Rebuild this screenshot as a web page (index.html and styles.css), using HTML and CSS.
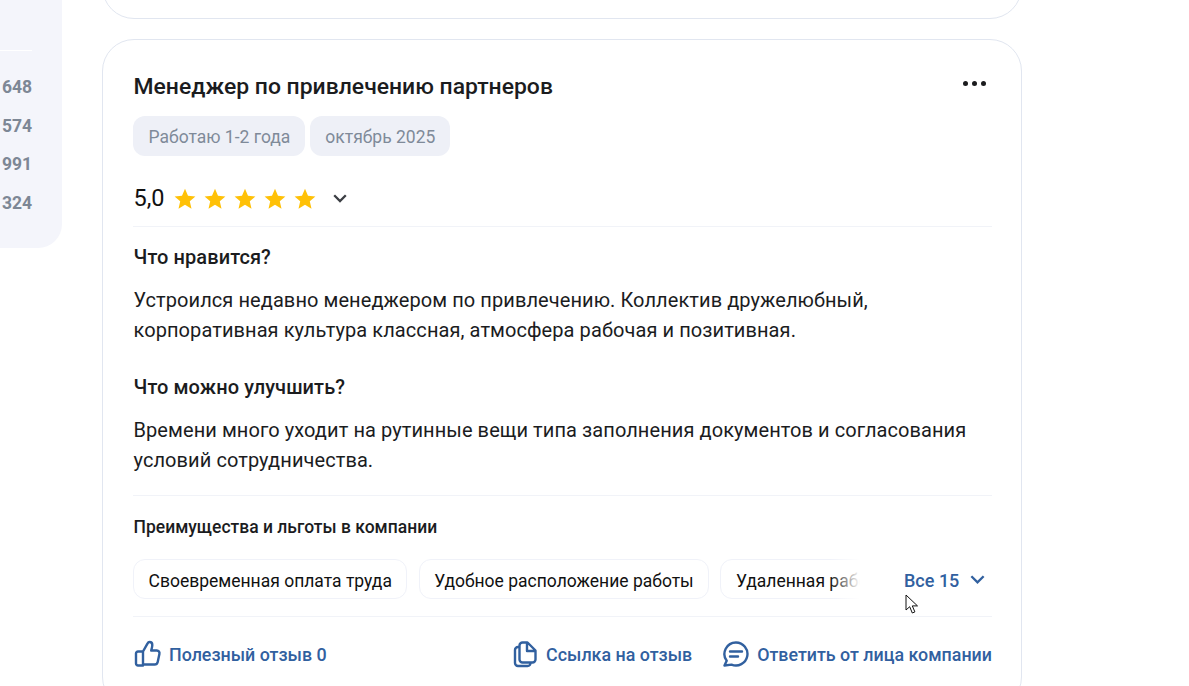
FILE: index.html
```html
<!DOCTYPE html>
<html lang="en">
<head>
    <meta charset="UTF-8">
    <meta name="viewport" content="width=device-width, initial-scale=1.0">
    <title>Отзывы</title>
    <link rel="stylesheet" href="styles.css">
</head>
<body>
<div class="page">
    <aside class="side">
        <div class="side-line"></div>
        <div class="side-num">648</div>
        <div class="side-num">574</div>
        <div class="side-num">991</div>
        <div class="side-num">324</div>
    </aside>

    <main class="feed">
        <div class="card card-prev"></div>

        <div class="card">
            <div class="card-head">
                <h2 class="card-title">Менеджер по привлечению партнеров</h2>
                <div class="more"><span></span><span></span><span></span></div>
            </div>

            <div class="tags">
                <span class="tag">Работаю 1-2 года</span>
                <span class="tag">октябрь 2025</span>
            </div>

            <div class="rating">
                <span class="rating-num">5,0</span>
                <div class="stars">
                    <svg class="star" viewBox="0 0 22 22"><path d="M11 .8l3 7 7.400.6-5.600 4.900 1.700 7.400L11 16.800l-6.500 3.900 1.700-7.400L.6 8.400 8 7.800z"/></svg>
                    <svg class="star" viewBox="0 0 22 22"><path d="M11 .8l3 7 7.400.6-5.600 4.900 1.700 7.400L11 16.800l-6.500 3.900 1.700-7.400L.6 8.400 8 7.800z"/></svg>
                    <svg class="star" viewBox="0 0 22 22"><path d="M11 .8l3 7 7.400.6-5.600 4.900 1.700 7.400L11 16.800l-6.500 3.900 1.700-7.400L.6 8.400 8 7.800z"/></svg>
                    <svg class="star" viewBox="0 0 22 22"><path d="M11 .8l3 7 7.400.6-5.600 4.900 1.700 7.400L11 16.800l-6.500 3.900 1.700-7.400L.6 8.400 8 7.800z"/></svg>
                    <svg class="star" viewBox="0 0 22 22"><path d="M11 .8l3 7 7.400.6-5.600 4.900 1.700 7.400L11 16.800l-6.500 3.900 1.700-7.400L.6 8.400 8 7.800z"/></svg>
                </div>
                <svg class="rating-arrow" viewBox="0 0 14 9"><path d="M1.200 1.200L7 7l5.800-5.800"/></svg>
            </div>

            <div class="review">
                <h3 class="review-head">Что нравится?</h3>
                <p class="review-text">Устроился недавно менеджером по привлечению. Коллектив дружелюбный, корпоративная культура классная, атмосфера рабочая и позитивная.</p>
                <h3 class="review-head review-head-next">Что можно улучшить?</h3>
                <p class="review-text">Времени много уходит на рутинные вещи типа заполнения документов и согласования условий сотрудничества.</p>
            </div>

            <div class="perks">
                <h4 class="perks-title">Преимущества и льготы в компании</h4>
                <div class="perks-row">
                    <div class="chips">
                        <span class="chip">Своевременная оплата труда</span>
                        <span class="chip">Удобное расположение работы</span>
                        <span class="chip">Удаленная работа</span>
                    </div>
                    <div class="perks-all">
                        <span class="perks-all-text">Все 15</span>
                        <svg class="all-arrow" viewBox="0 0 14 9"><path d="M1.200 1.200L7 7l5.800-5.800"/></svg>
                    </div>
                </div>
            </div>

            <div class="actions">
                <a class="action">
                    <svg class="action-icon" viewBox="0 0 28 28"><path d="M10 25.500H5a2 2 0 0 1-2-2V13.500a2 2 0 0 1 2-2h5zM10 11.500l4.300-7.700c.6-1.100 1.300-1.800 2.300-1.800 1.700 0 2.700 1.400 2.700 3 0 1.700-.6 3.700-1.100 5.500h5.600c1.900 0 3 1.600 2.600 3.400l-1.700 8c-.4 1.700-1.500 2.600-3.100 2.600H10"/></svg>
                    <span>Полезный отзыв 0</span>
                </a>
                <div class="actions-right">
                    <a class="action">
                        <svg class="action-icon" viewBox="0 0 28 28"><path d="M12.500 2.500h5l8 8v9a3 3 0 0 1-3 3H12.500a3 3 0 0 1-3-3v-14a3 3 0 0 1 3-3zM17 3v8H25M9.500 7H8a3 3 0 0 0-3 3v13a3 3 0 0 0 3 3h9.500a3 3 0 0 0 3-3.500"/></svg>
                        <span>Ссылка на отзыв</span>
                    </a>
                    <a class="action">
                        <svg class="action-icon" viewBox="0 0 28 28"><path d="M15 2.500a11.500 11.500 0 1 1-4.500 22.100L3.500 25.500l2.200-4.700A11.500 11.500 0 0 1 15 2.500zM9 11.500h12M9 16.500h8"/></svg>
                        <span>Ответить от лица компании</span>
                    </a>
                </div>
            </div>
        </div>
    </main>
</div>

<svg class="cursor" viewBox="0 0 14 20"><path d="M1 1v15l3.700-3.300L7.300 19l2.600-1.100-2.600-6H12.500z"/></svg>
</body>
</html>
```

FILE: styles.css
```css
*{
    margin: 0;
    padding: 0;
    box-sizing: border-box;
}
html, body{
    height: 686px;
    overflow: hidden;
    background-color: #fff;
    font-family: Roboto, "Liberation Sans", sans-serif;
}
.page{
    display: flex;
    align-items: flex-start;
    gap: 40px;
}
.side{
    width: 62px;
    height: 248px;
    flex-shrink: 0;
    background-color: #f4f5fb;
    border-bottom-right-radius: 24px;
    padding-top: 50px;
    padding-right: 30px;
}
.side-line{
    height: 1px;
    background-color: #fff;
    margin-bottom: 24.400px;
}
.side-num{
    height: 38.400px;
    line-height: 24px;
    font-size: 17.500px;
    font-weight: 700;
    color: #7d8795;
    text-align: right;
}
.feed{
    width: 920px;
    display: flex;
    flex-direction: column;
    gap: 20px;
    margin-top: -300px;
}
.card{
    border: 1px solid #e1e6f0;
    border-radius: 32px;
    padding: 32px 29px 40px 30px;
    background-color: #fff;
}
.card-prev{
    height: 319px;
}
.card-head{
    display: flex;
    justify-content: space-between;
    align-items: center;
}
.card-title{
    font-size: 22.950px;
    line-height: 30px;
    font-weight: 500;
    color: #1b1c1e;
    padding-left: .5px;
}
.more{
    display: flex;
    gap: 4px;
    margin-right: 6px;
    margin-top: -7px;
}
.more span{
    width: 5px;
    height: 5px;
    border-radius: 50%;
    background-color: #1b1c1e;
}
.tags{
    display: flex;
    gap: 5px;
    margin-top: 14px;
}
.tag{
    height: 40px;
    line-height: 40px;
    padding: 1px 14.500px 0 15.500px;
    border-radius: 12px;
    background-color: #eef0f7;
    color: #7f8a99;
    font-size: 17.500px;
}
.rating{
    display: flex;
    align-items: center;
    height: 71px;
    padding-top: 15px;
    border-bottom: 1px solid #f1f3f8;
}
.rating-num{
    font-size: 23.500px;
    color: #111;
    margin: 0 9px 2px .5px;
}
.stars{
    display: flex;
    gap: 8px;
}
.star{
    width: 22px;
    height: 22px;
    fill: #ffc107;
}
.rating-arrow{
    width: 14px;
    height: 9px;
    margin-left: 17px;
    fill: none;
    stroke: #3c3f44;
    stroke-width: 2.300;
}
.review{
    padding-top: 15px;
}
.review-head{
    font-size: 20px;
    line-height: 30px;
    font-weight: 500;
    letter-spacing: .08px;
    color: #1b1c1e;
    margin-bottom: 13px;
    padding-left: .5px;
}
.review-head-next{
    margin-top: 27px;
}
.review-text{
    font-size: 20px;
    line-height: 30px;
    letter-spacing: .08px;
    color: #1b1c1e;
    padding-left: .5px;
}
.perks{
    margin-top: 20px;
    padding-top: 20px;
    border-top: 1px solid #f1f3f8;
}
.perks-title{
    font-size: 17.500px;
    line-height: 22px;
    font-weight: 500;
    color: #1b1c1e;
    padding-left: .5px;
}
.perks-row{
    display: flex;
    align-items: center;
    margin-top: 21px;
    padding-bottom: 17px;
    border-bottom: 1px solid #f1f3f8;
}
.chips{
    display: flex;
    gap: 11.700px;
    width: 727px;
    overflow: hidden;
    position: relative;
}
.chips::after{
    content: "";
    position: absolute;
    top: 0;
    right: 0;
    bottom: 0;
    width: 30px;
    background: linear-gradient(90deg, rgba(255,255,255,0), #fff);
}
.chip{
    height: 40px;
    line-height: 38px;
    padding: 2px 14px 0 14.500px;
    border: 1px solid #f0f2f9;
    border-radius: 12px;
    font-size: 17.500px;
    color: #111;
    white-space: nowrap;
    flex-shrink: 0;
}
.perks-all{
    display: flex;
    align-items: center;
    margin-left: 44px;
    color: #31609f;
    font-size: 18px;
    font-weight: 500;
    padding-top: 2px;
}
.all-arrow{
    width: 15px;
    height: 9.500px;
    margin-left: 10.500px;
    fill: none;
    stroke: #31609f;
    stroke-width: 2.200;
}
.actions{
    display: flex;
    justify-content: space-between;
    align-items: center;
    margin-top: 23px;
}
.actions-right{
    display: flex;
    gap: 29px;
}
.action{
    display: flex;
    align-items: center;
    gap: 8px;
    color: #31609f;
    font-size: 17.850px;
    font-weight: 500;
    white-space: nowrap;
}
.action-icon{
    width: 28px;
    height: 28px;
    fill: none;
    stroke: #31609f;
    stroke-width: 2.400;
    stroke-linejoin: round;
    stroke-linecap: round;
}
.cursor{
    position: absolute;
    left: 905px;
    top: 594px;
    width: 14px;
    height: 20px;
    fill: #fff;
    stroke: #111;
    stroke-width: 1;
}
```
